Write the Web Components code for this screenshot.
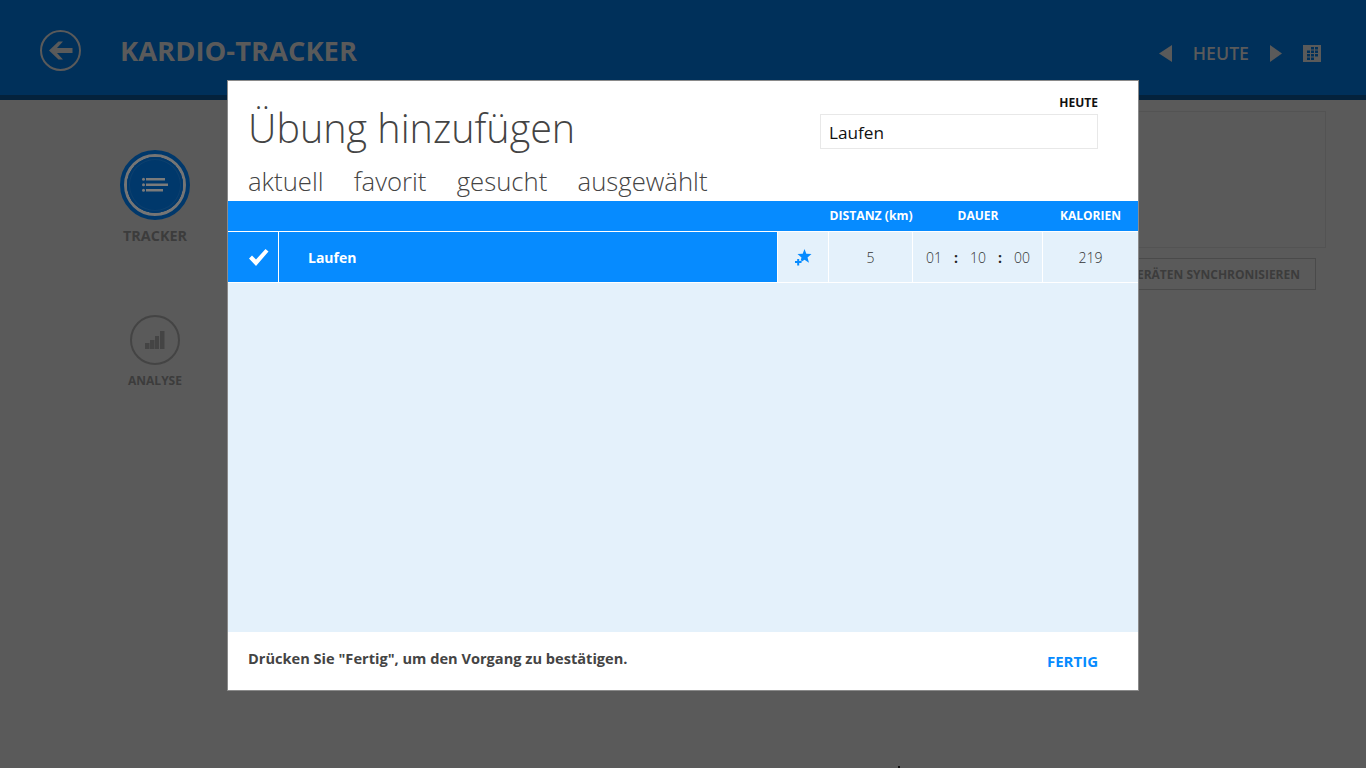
<!DOCTYPE html>
<html lang="de">
<head>
<meta charset="utf-8">
<title>Kardio-Tracker</title>
<style>
    html, body { margin: 0; height: 100%; }
    body { background: #5a5a5a; font-family: "Open Sans", "Noto Sans", sans-serif; overflow: hidden; }
</style>
</head>
<body>
<cardio-app></cardio-app>

<script>
class AppHeader extends HTMLElement {
    connectedCallback() {
        this.attachShadow({ mode: 'open' });
        this.shadowRoot.innerHTML = `
            <style>
                :host {
                    display: flex;
                    align-items: center;
                    box-sizing: border-box;
                    height: 100px;
                    padding: 6px 45px 0 40px;
                    background: #00305a;
                    border-bottom: 5px solid #04223c;
                    color: #5a5a5a;
                }
                .back { display: block; width: 41px; height: 41px; margin-right: 39px; }
                h1 { flex: 1; margin: 0; font-size: 27.400px; font-weight: 700; }
                .date { display: flex; align-items: center; margin-top: 5px; }
                .date span { font-size: 17.700px; font-weight: 600; margin: 0 21px 0 21px; }
                svg { display: block; }
                .cal { margin-left: 21px; }
            </style>
            <svg class="back" viewBox="0 0 41 41">
                <circle cx="20.5" cy="20.5" r="19.5" fill="none" stroke="#5a5a5a" stroke-width="2"/>
                <path d="M9 20.5 18.5 11.5h4.5l-6 6.500h15.500v5H17l6 6.500h-4.500z" fill="#5a5a5a"/>
            </svg>
            <h1>KARDIO-TRACKER</h1>
            <div class="date">
                <svg width="13" height="17" viewBox="0 0 13 17"><path d="M13 0v17L0 8.500z" fill="#5a5a5a"/></svg>
                <span>HEUTE</span>
                <svg width="12" height="17" viewBox="0 0 12 17"><path d="M0 0v17l12-8.500z" fill="#5a5a5a"/></svg>
                <svg class="cal" width="18" height="17" viewBox="0 0 18 17">
                    <path fill="#5a5a5a" fill-rule="evenodd" d="M0 0h18v17H0zM8 2v2.500h3V2zM12 2v2.500h3V2zM4 5.500V8h3V5.500zM8 5.500V8h3V5.500zM12 5.500V8h3V5.500zM4 9v2.500h3V9zM8 9v2.500h3V9zM12 9v2.500h3V9zM4 12.500V15h3v-2.500zM8 12.500V15h3v-2.500z"/>
                </svg>
            </div>
        `;
    }
}

class NavItem extends HTMLElement {
    connectedCallback() {
        const active = this.hasAttribute('active');
        this.attachShadow({ mode: 'open' });
        this.shadowRoot.innerHTML = `
            <style>
                :host {
                    display: flex;
                    flex-direction: column;
                    align-items: center;
                    color: #3c3c3c;
                    font-weight: 700;
                }
                .label { font-size: ${active ? 14.400 : 12}px; line-height: 18px; margin-top: 7px; }
                .outer {
                    box-sizing: border-box;
                    width: 70px;
                    height: 70px;
                    border-radius: 50%;
                    border: 4px solid #00386b;
                    padding: 3px;
                    background: #757575;
                }
                .inner {
                    display: flex;
                    align-items: center;
                    justify-content: center;
                    height: 100%;
                    border-radius: 50%;
                    background: #00386b;
                    box-shadow: inset 0 0 0 2px #00386b, inset 0 0 0 3px #0b3f6e;
                }
                .plain {
                    display: flex;
                    align-items: center;
                    justify-content: center;
                    box-sizing: border-box;
                    width: 50px;
                    height: 50px;
                    border: 2px solid #444;
                    border-radius: 50%;
                }
            </style>
            ${active
                ? `<div class="outer"><div class="inner"><slot></slot></div></div>`
                : `<div class="plain"><slot></slot></div>`}
            <div class="label">${this.getAttribute('label')}</div>
        `;
    }
}

class SideNav extends HTMLElement {
    connectedCallback() {
        this.attachShadow({ mode: 'open' });
        this.shadowRoot.innerHTML = `
            <style>
                :host {
                    display: flex;
                    flex-direction: column;
                    align-items: center;
                    gap: 70px;
                    box-sizing: border-box;
                    width: 310px;
                    padding-top: 50px;
                }
                svg { display: block; }
            </style>
            <nav-item active label="TRACKER">
                <svg width="26" height="16" viewBox="0 0 26 16" fill="#7b7b7b">
                    <circle cx="1.500" cy="2.200" r="1.500"/><rect x="4" y="1" width="19" height="2.500"/>
                    <circle cx="1.500" cy="7.800" r="1.500"/><rect x="4" y="6.500" width="22" height="2.500"/>
                    <circle cx="1.500" cy="13.200" r="1.500"/><rect x="4" y="12" width="17" height="2.500"/>
                </svg>
            </nav-item>
            <nav-item label="ANALYSE">
                <svg width="20" height="20" viewBox="0 0 20 20" fill="#444">
                    <rect x="0" y="13" width="4.500" height="6"/><rect x="5" y="10" width="4.500" height="9"/>
                    <rect x="10" y="6" width="4" height="13"/><rect x="15" y="1" width="4.500" height="18"/>
                </svg>
            </nav-item>
        `;
    }
}

class TrackerContent extends HTMLElement {
    connectedCallback() {
        this.attachShadow({ mode: 'open' });
        this.shadowRoot.innerHTML = `
            <style>
                :host {
                    display: flex;
                    flex: 1;
                    flex-direction: column;
                    align-items: flex-end;
                    box-sizing: border-box;
                    padding: 11px 40px 0 0;
                }
                .panel {
                    box-sizing: border-box;
                    width: 100%;
                    height: 137px;
                    border: 1px solid #535353;
                }
                button {
                    box-sizing: border-box;
                    height: 32px;
                    margin: 10px 10px 0 0;
                    padding: 0 15px;
                    border: 1px solid #4a4a4a;
                    background: none;
                    color: #3c3c3c;
                    font: 700 12px "Open Sans", sans-serif;
                }
            </style>
            <div class="panel"></div>
            <button>MIT GERÄTEN SYNCHRONISIEREN</button>
        `;
    }
}

class ExerciseRow extends HTMLElement {
    connectedCallback() {
        const [h, m, s] = this.getAttribute('duration').split(':');
        this.attachShadow({ mode: 'open' });
        this.shadowRoot.innerHTML = `
            <style>
                :host {
                    display: grid;
                    grid-template-columns: 51px 498px 52px 84px 130px 1fr;
                    height: 51px;
                    box-sizing: border-box;
                    border-bottom: 1px solid #fff;
                    color: #333;
                    font-size: 14px;
                    font-weight: 300;
                }
                div { display: flex; align-items: center; justify-content: center; box-sizing: border-box; border-right: 1px solid #fff; }
                div:last-child { border-right: 0; }
                .check, .name { background: #068bff; color: #fff; }
                .check { padding-left: 11px; }
                .name { justify-content: flex-start; padding-left: 29px; font-size: 14px; font-weight: 700; border-right: 0; }
                .fav { border-left: 1px solid #fff; padding-left: 1px; }
                .time { gap: 12px; padding-left: 1px; }
                .time b { color: #222; font-weight: 700; }
                svg { display: block; }
            </style>
            <div class="check">
                <svg width="21" height="19" viewBox="0 0 21 19"><path d="M1 10.500 4 7.500l4 4L17.500 1 20.500 3.500 8 18z" fill="#fff"/></svg>
            </div>
            <div class="name">${this.getAttribute('name')}</div>
            <div class="fav">
                <svg width="17" height="17" viewBox="0 0 17 17">
                    <path d="M9.500 0 11.300 4.800 16.500 5 12.500 8.500 14 13.700 9.500 10.700 5 13.700 6.500 8.500 2.500 5 7.700 4.800z" fill="#068bff"/>
                    <path d="M0 13h6.500M3.200 9.500v7" stroke="#e4f1fb" stroke-width="3" fill="none"/>
                    <path d="M0 13h6.500M3.200 10v6.500" stroke="#068bff" stroke-width="2" fill="none"/>
                </svg>
            </div>
            <div>${this.getAttribute('distance')}</div>
            <div class="time"><span>${h}</span><b>:</b><span>${m}</span><b>:</b><span>${s}</span></div>
            <div>${this.getAttribute('calories')}</div>
        `;
    }
}

class AddDialog extends HTMLElement {
    connectedCallback() {
        this.attachShadow({ mode: 'open' });
        this.shadowRoot.innerHTML = `
            <style>
                :host {
                    position: absolute;
                    left: 227px;
                    top: 80px;
                    display: flex;
                    flex-direction: column;
                    box-sizing: border-box;
                    width: 912px;
                    height: 611px;
                    background: #fff;
                    border: 1px solid #8a8a8a;
                    color: #444;
                }
                .top { display: flex; justify-content: space-between; height: 120px; box-sizing: border-box; padding: 0 40px 0 20px; }
                h2 { margin: 19px 0 0; font-size: 39.500px; line-height: 56px; font-weight: 300; }
                .tabs { display: flex; gap: 30.300px; margin-top: 8px; font-size: 25.700px; line-height: 36px; font-weight: 300; }
                .day { display: flex; flex-direction: column; align-items: flex-end; width: 278px; padding-top: 14px; }
                .day label { font-size: 12px; line-height: 15px; font-weight: 700; color: #111; }
                .search { box-sizing: border-box; width: 100%; height: 35px; margin-top: 4px; padding-left: 8px; border: 1px solid #e8e8e8; color: #111; font-size: 17.200px; line-height: 35px; }
                .thead {
                    display: grid;
                    grid-template-columns: 601px 84px 130px 1fr;
                    height: 31px;
                    box-sizing: border-box;
                    background: #068bff;
                    border-bottom: 1px solid #fff;
                    color: #fff;
                    font-size: 12px;
                    font-weight: 700;
                }
                .thead span { display: flex; align-items: center; justify-content: center; padding-bottom: 2px; white-space: nowrap; }
                .thead .wide { font-size: 12.200px; }
                .list { flex: 1; background: #e4f1fb; }
                .foot { display: flex; align-items: center; justify-content: space-between; height: 58px; padding: 0 40px 0 20px; }
                .hint { font-size: 14.600px; font-weight: 700; padding-bottom: 6px; }
                .done { color: #068bff; font-size: 15px; font-weight: 700; }
            </style>
            <div class="top">
                <div>
                    <h2>Übung hinzufügen</h2>
                    <div class="tabs"><span>aktuell</span><span>favorit</span><span>gesucht</span><span>ausgewählt</span></div>
                </div>
                <div class="day">
                    <label>HEUTE</label>
                    <div class="search">Laufen</div>
                </div>
            </div>
            <div class="thead"><span></span><span class="wide">DISTANZ (km)</span><span>DAUER</span><span>KALORIEN</span></div>
            <div class="list"><slot></slot></div>
            <div class="foot">
                <div class="hint">Drücken Sie "Fertig", um den Vorgang zu bestätigen.</div>
                <div class="done">FERTIG</div>
            </div>
        `;
    }
}

class CardioApp extends HTMLElement {
    connectedCallback() {
        this.attachShadow({ mode: 'open' });
        this.shadowRoot.innerHTML = `
            <style>
                :host { display: block; position: relative; height: 768px; overflow: hidden; }
                main { display: flex; }
                .pointer { position: absolute; left: 898px; top: 766px; width: 2px; height: 2px; background: #111; }
            </style>
            <app-header></app-header>
            <main>
                <side-nav></side-nav>
                <tracker-content></tracker-content>
            </main>
            <add-dialog>
                <exercise-row name="Laufen" distance="5" duration="01:10:00" calories="219"></exercise-row>
            </add-dialog>
            <div class="pointer"></div>
        `;
    }
}

customElements.define('app-header', AppHeader);
customElements.define('nav-item', NavItem);
customElements.define('side-nav', SideNav);
customElements.define('tracker-content', TrackerContent);
customElements.define('exercise-row', ExerciseRow);
customElements.define('add-dialog', AddDialog);
customElements.define('cardio-app', CardioApp);
</script>
</body>
</html>
